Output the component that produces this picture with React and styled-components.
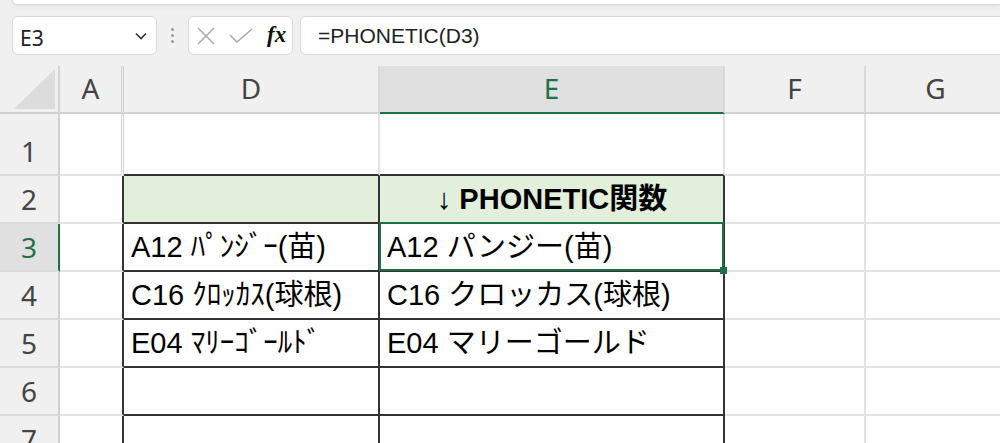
import React from 'react'
import styled, { createGlobalStyle } from 'styled-components'

const GREEN = '#1e7145'

const columns = [
    { id: 'A', width: 64 },
    { id: 'D', width: 256 },
    { id: 'E', width: 345, selected: true },
    { id: 'F', width: 141 },
    { id: 'G', width: 141 },
]

const rows = [
    { n: 1, d: '', e: '', height: 62 },
    { n: 2, d: '', e: '↓ PHONETIC関数', head: true },
    { n: 3, d: 'A12 ﾊﾟﾝｼﾞｰ(苗)', e: 'A12 パンジー(苗)', selected: true },
    { n: 4, d: 'C16 ｸﾛｯｶｽ(球根)', e: 'C16 クロッカス(球根)' },
    { n: 5, d: 'E04 ﾏﾘｰｺﾞｰﾙﾄﾞ', e: 'E04 マリーゴールド' },
    { n: 6, d: '', e: '' },
    { n: 7, d: '', e: '' },
]

function App() {
    return (
        <>
            <GlobalStyle />
            <Page>
                <RibbonEdge />
                <FormulaBar>
                    <NameBox>
                        <span>E3</span>
                        <svg width="12" height="8" viewBox="0 0 12 8">
                            <path d="M1 1.5l5 5 5-5" fill="none" stroke="#333" strokeWidth="1.6" />
                        </svg>
                    </NameBox>
                    <Grip>
                        <i /><i /><i />
                    </Grip>
                    <FnBox>
                        <svg width="18" height="18" viewBox="0 0 18 18">
                            <path d="M1 1l16 16M17 1L1 17" stroke="#a8a8a8" strokeWidth="1.5" />
                        </svg>
                        <svg width="24" height="15" viewBox="0 0 24 15">
                            <path d="M1 7l7 7L23 1" fill="none" stroke="#a8a8a8" strokeWidth="1.5" />
                        </svg>
                        <Fx>fx</Fx>
                    </FnBox>
                    <FormulaInput>=PHONETIC(D3)</FormulaInput>
                </FormulaBar>

                <Sheet $rows={rows.map(r => r.height || 48)}>
                    <Corner>
                        <svg width="41" height="40" viewBox="0 0 41 40">
                            <polygon points="41,0 41,40 0,40" fill="#dcdcdc" />
                        </svg>
                    </Corner>
                    {columns.map((c) => (
                        <ColHeader key={c.id} $selected={c.selected} $hidden={c.id === 'A'}>
                            {c.id}
                        </ColHeader>
                    ))}

                    {rows.map((r) => {
                        const inTable = r.n >= 2
                        return (
                            <React.Fragment key={r.n}>
                                <RowHeader $selected={r.selected}>{r.n}</RowHeader>
                                <Cell $right={inTable ? 'dark' : 'double'} />
                                <Cell
                                    $right={inTable ? 'dark' : 'grid'}
                                    $bottom="dark"
                                    $fill={r.head ? '#e2efda' : null}
                                >
                                    {r.d}
                                </Cell>
                                <Cell
                                    $right={inTable ? 'dark' : 'grid'}
                                    $bottom="dark"
                                    $fill={r.head ? '#e2efda' : null}
                                    $center={r.head}
                                    $bold={r.head}
                                >
                                    {r.e}
                                    {r.selected && (
                                        <Selection>
                                            <Handle />
                                        </Selection>
                                    )}
                                </Cell>
                                <Cell />
                                <Cell />
                            </React.Fragment>
                        )
                    })}
                </Sheet>
            </Page>
        </>
    )
}

const GlobalStyle = createGlobalStyle`
    * { box-sizing: border-box; }
    html, body {
        margin: 0;
        background: #f0f0f0;
        overflow: hidden;
    }
`

const Page = styled.div`
    width: 1000px;
    height: 443px;
    overflow: hidden;
    background: #f0f0f0;
    font-family: "Noto Sans", sans-serif;
`

const RibbonEdge = styled.div`
    height: 5px;
    margin-left: 12px;
    background: #fff;
    border: 1px solid #d6d6d6;
    border-top: none;
    border-right: none;
    border-bottom-left-radius: 7px;
    box-shadow: 0 2px 5px rgba(0, 0, 0, 0.06);
`

const FormulaBar = styled.div`
    display: flex;
    align-items: stretch;
    height: 39px;
    margin: 11px -12px 11px 0;
    padding-left: 12px;
`

const Box = styled.div`
    background: #fff;
    border: 1px solid #dadada;
    border-radius: 6px;
    display: flex;
    align-items: center;
`

const NameBox = styled(Box)`
    width: 145px;
    justify-content: space-between;
    padding: 0 9px 0 7px;
    span {
        font: 21px/1 "Noto Sans", sans-serif;
        color: #222;
        margin-top: 5px;
    }
`

const Grip = styled.div`
    width: 31px;
    display: flex;
    flex-direction: column;
    align-items: center;
    justify-content: center;
    gap: 3px;
    i {
        width: 3px;
        height: 3px;
        background: #999;
        border-radius: 50%;
    }
`

const FnBox = styled(Box)`
    width: 105px;
    padding-left: 8px;
    gap: 14px;
`

const Fx = styled.span`
    font: italic 700 23px/1 "Liberation Serif", serif;
    color: #111;
    margin-bottom: 2px;
`

const FormulaInput = styled(Box)`
    flex: 1;
    margin-left: 7px;
    padding-left: 17px;
    font: 21px/1 "Liberation Sans", "Noto Sans CJK JP", sans-serif;
    color: #222;
`

const Sheet = styled.div`
    display: grid;
    grid-template-columns: 60px ${columns.map(c => c.width + 'px').join(' ')};
    grid-template-rows: 48px ${p => p.$rows.map(h => h + 'px').join(' ')};
`

const Corner = styled.div`
    display: flex;
    justify-content: flex-end;
    align-items: flex-end;
    padding: 0 3px 3px 0;
    border-right: 2px solid #d2d2d2;
    border-bottom: 2px solid #d2d2d2;
`

const ColHeader = styled.div`
    display: flex;
    align-items: center;
    justify-content: center;
    padding-bottom: 3px;
    font: 28px/1 "Noto Sans", sans-serif;
    color: ${p => p.$selected ? GREEN : '#444'};
    background: ${p => p.$selected ? '#e0e0e0' : '#f0f0f0'};
    border-right: ${p => p.$hidden ? '3px double #cfcfcf' : '2px solid #d9d9d9'};
    border-bottom: 2px solid ${p => p.$selected ? GREEN : '#d2d2d2'};
`

const RowHeader = styled.div`
    display: flex;
    align-items: flex-end;
    justify-content: center;
    padding-bottom: 9px;
    font: 28px/1 "Noto Sans", sans-serif;
    color: ${p => p.$selected ? GREEN : '#444'};
    background: ${p => p.$selected ? '#e0e0e0' : '#f0f0f0'};
    border-right: 2px solid ${p => p.$selected ? GREEN : '#d0d0d0'};
    border-bottom: 2px solid #dcdcdc;
`

const lines = {
    grid: '2px solid #e2e2e2',
    dark: '2px solid #333',
    double: '3px double #d0d0d0',
}

const Cell = styled.div`
    position: relative;
    display: flex;
    align-items: flex-end;
    justify-content: ${p => p.$center ? 'center' : 'flex-start'};
    padding: 0 6px 8px 7px;
    background: ${p => p.$fill || '#fff'};
    border-right: ${p => lines[p.$right || 'grid']};
    border-bottom: ${p => lines[p.$bottom || 'grid']};
    font: ${p => p.$bold ? 700 : 400} 29px/1 "Liberation Sans", "Noto Sans CJK JP", sans-serif;
    color: #000;
    white-space: nowrap;
`

const Selection = styled.div`
    position: absolute;
    top: -2px;
    left: -1px;
    right: -1px;
    bottom: -1px;
    border: 2px solid ${GREEN};
    z-index: 2;
    pointer-events: none;
`

const Handle = styled.div`
    position: absolute;
    right: -5px;
    bottom: -5px;
    width: 7px;
    height: 7px;
    background: ${GREEN};
`

export default App
